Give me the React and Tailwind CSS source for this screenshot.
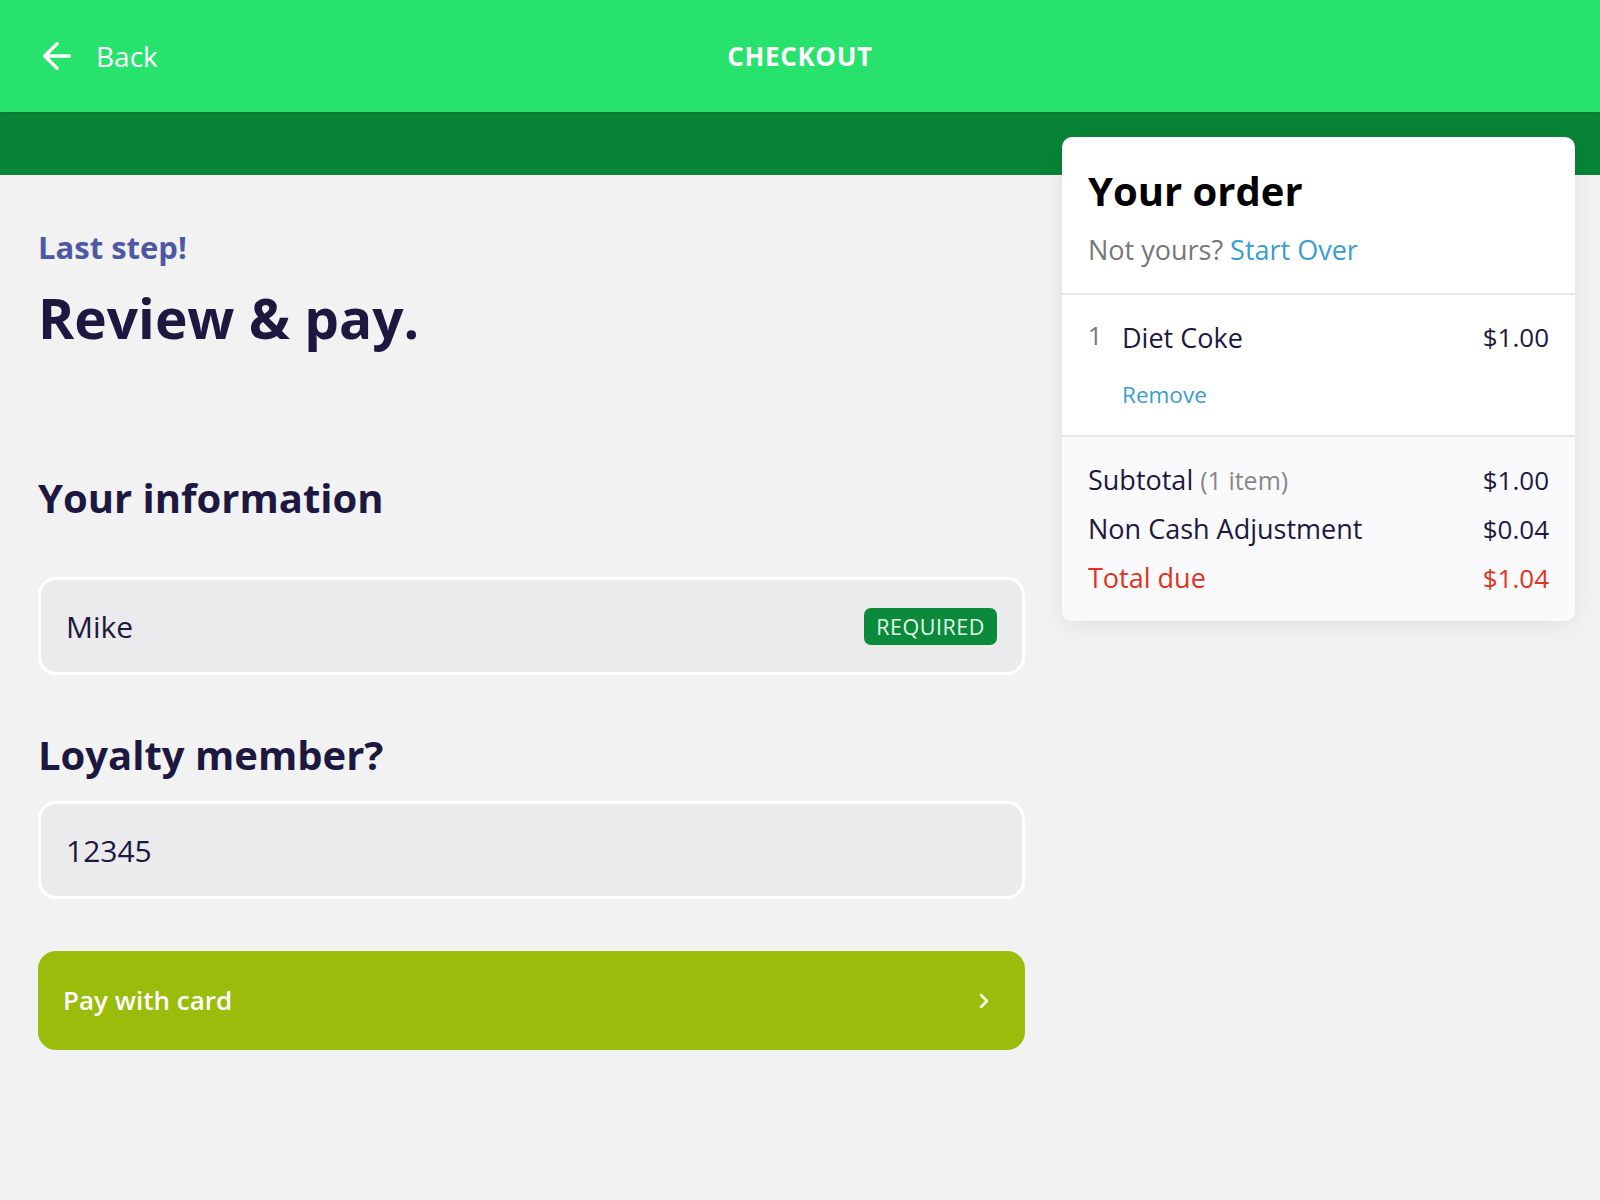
import { ArrowLeft, ChevronRight } from 'lucide-react';

/*
 * Checkout screen: header bar, review form on the left, order summary card on the right.
 */

const order = [{ qty: 1, name: 'Diet Coke', price: '$1.00' }];

export default function App() {
    return (
        <div className="min-h-[1200px] w-[1600px] bg-[#f2f2f2] font-['Open_Sans',sans-serif]">
            {/* Top bar */}
            <div className="relative flex h-[112px] items-center bg-[#27e26c] px-[36px] shadow-[0_1px_2px_rgba(0,0,0,0.08)]">
                <div className="flex items-center gap-[18px] text-white">
                    <ArrowLeft size={42} strokeWidth={2} />
                    <span className="text-[28px] font-medium">Back</span>
                </div>
                <div className="absolute inset-x-0 text-center text-[26px] font-bold tracking-wide text-white pointer-events-none">
                    CHECKOUT
                </div>
            </div>
            <div className="h-[63px] bg-[#088436]" />

            <div className="flex items-start">
                {/* Left column */}
                <div className="w-[1025px] pl-[38px]">
                    <p className="mt-[52px] text-[31px] font-bold leading-[40px] text-[#4e58a4]">Last step!</p>
                    <h1 className="mt-[16px] text-[55px] font-bold leading-[70px] text-[#1d1840]">Review &amp; pay.</h1>

                    <h2 className="mt-[117px] text-[40px] font-bold leading-[56px] text-[#1d1840]">Your information</h2>
                    <div className="mt-[51px] flex h-[98px] items-center justify-between rounded-[18px] border-[3px] border-white bg-[#ebebed] pl-[25px] pr-[25px]">
                        <span className="text-[30px] text-[#1d1840]">Mike</span>
                        <span className="rounded-[7px] bg-[#0b8a3b] px-[12px] py-[4px] text-[21.5px] font-medium leading-[29px] tracking-wide text-[#e4fbe9]">REQUIRED</span>
                    </div>

                    <h2 className="mt-[52px] text-[40px] font-bold leading-[56px] text-[#1d1840]">Loyalty member?</h2>
                    <div className="mt-[18px] flex h-[98px] items-center rounded-[18px] border-[3px] border-white bg-[#ebebed] pl-[25px]">
                        <span className="text-[30px] text-[#1d1840]">12345</span>
                    </div>

                    <button className="mt-[52px] flex h-[99px] w-full items-center justify-between rounded-[18px] bg-[#9abc0a] pl-[25px] pr-[29px] text-white">
                        <span className="text-[26px] font-semibold">Pay with card</span>
                        <ChevronRight size={24} strokeWidth={2.5} />
                    </button>
                </div>

                {/* Order summary */}
                <div className="-mt-[38px] ml-[37px] w-[513px] overflow-hidden rounded-[10px] bg-white shadow-[0_6px_24px_rgba(0,0,0,0.07)]">
                    <div className="px-[26px] pt-[26px] pb-[22px]">
                        <h3 className="text-[40px] font-bold leading-[56px] text-black">Your order</h3>
                        <p className="mt-[11px] text-[27px] text-[#777]">
                            Not yours? <span className="text-[#3a9dd0]">Start Over</span>
                        </p>
                    </div>
                    <div className="border-t-2 border-[#e6e6e8] px-[26px] pt-[23px] pb-[23px]">
                        {order.map((item) => (
                            <div key={item.name}>
                                <div className="flex items-center">
                                    <span className="w-[34px] -mt-[4px] text-[25px] text-[#777]">{item.qty}</span>
                                    <span className="flex-1 text-[27px] font-medium text-[#1d1840]">{item.name}</span>
                                    <span className="text-[26px] font-medium text-[#1d1840]">{item.price}</span>
                                </div>
                                <p className="mt-[20px] pl-[34px] text-[22.5px] font-medium text-[#3a9dd0]">Remove</p>
                            </div>
                        ))}
                    </div>
                    <div className="flex flex-col gap-[13px] border-t-2 border-[#e6e6e8] bg-[#fafafc] px-[26px] pt-[25px] pb-[25px] text-[27px] font-medium leading-[36px]">
                        <div className="flex justify-between text-[#1d1840]">
                            <span>Subtotal <span className="text-[25px] font-normal text-[#888]">(1 item)</span></span>
                            <span className="text-[26px]">$1.00</span>
                        </div>
                        <div className="flex justify-between text-[#1d1840]">
                            <span>Non Cash Adjustment</span>
                            <span className="text-[26px]">$0.04</span>
                        </div>
                        <div className="flex justify-between text-[#e0321c]">
                            <span>Total due</span>
                            <span className="text-[26px]">$1.04</span>
                        </div>
                    </div>
                </div>
            </div>
        </div>
    );
}
